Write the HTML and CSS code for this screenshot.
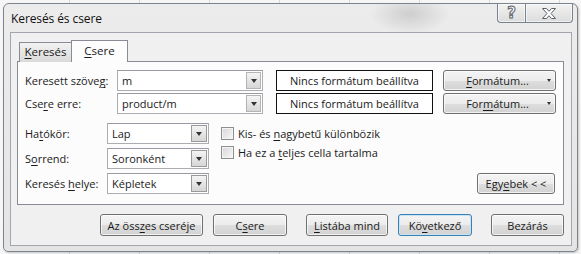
FILE: index.html
```html
<!DOCTYPE html>
<html lang="hu">
<head>
    <meta charset="UTF-8">
    <title>Keresés és csere</title>
    <link rel="stylesheet" href="styles.css">
</head>
<body>
    <div class="window">
        <div class="titlebar">
            <span class="title">Keresés és csere</span>
            <div class="caption-buttons">
                <span class="cap-btn help">?</span>
                <span class="cap-btn close">
                    <svg width="16" height="13" viewBox="0 0 16 13">
                        <path d="M1.5 1.5 H5.5 L8 4.3 L10.5 1.5 H14.5 L10 6.5 L14.5 11.5 H10.5 L8 8.7 L5.5 11.5 H1.5 L6 6.5 Z" fill="#fff" stroke="#5b6168" stroke-width="1" stroke-linejoin="round"/>
                    </svg>
                </span>
            </div>
        </div>
        <div class="client">
            <div class="tabs">
                <span class="tab"><u>K</u>eresés</span>
                <span class="tab active"><u>C</u>sere</span>
            </div>
            <div class="panel">
                <div class="find-row">
                    <label class="label-wide">Keresett szöve<u>g</u>:</label>
                    <div class="combo wide"><span class="value">m</span><span class="drop"></span></div>
                    <div class="format-box">Nincs formátum beállítva</div>
                    <button class="btn format"><span class="caption"><u>F</u>ormátum...</span><span class="arrow"></span></button>
                </div>
                <div class="find-row">
                    <label class="label-wide">Cse<u>r</u>e erre:</label>
                    <div class="combo wide"><span class="value">product/m</span><span class="drop"></span></div>
                    <div class="format-box">Nincs formátum beállítva</div>
                    <button class="btn format"><span class="caption">For<u>m</u>átum...</span><span class="arrow"></span></button>
                </div>

                <div class="options">
                    <div class="selects">
                        <div class="select-row">
                            <label class="label">Ha<u>t</u>ókör:</label>
                            <div class="combo narrow"><span class="value">Lap</span><span class="drop big"></span></div>
                        </div>
                        <div class="select-row">
                            <label class="label">S<u>o</u>rrend:</label>
                            <div class="combo narrow"><span class="value">Soronként</span><span class="drop big"></span></div>
                        </div>
                        <div class="select-row">
                            <label class="label">Keresés <u>h</u>elye:</label>
                            <div class="combo narrow"><span class="value">Képletek</span><span class="drop big"></span></div>
                        </div>
                    </div>
                    <div class="checks">
                        <label class="check"><span class="box"></span><span>Kis- és <u>n</u>agybetű különbözik</span></label>
                        <label class="check"><span class="box"></span><span>Ha ez a <u>t</u>eljes cella tartalma</span></label>
                    </div>
                    <button class="btn more">Egy<u>e</u>bek &lt; &lt;</button>
                </div>
            </div>
            <div class="actions">
                <button class="btn replace-all">Az öss<u>z</u>es cseréje</button>
                <button class="btn replace">C<u>s</u>ere</button>
                <button class="btn list-all"><u>L</u>istába mind</button>
                <button class="btn next default">Kö<u>v</u>etkező</button>
                <button class="btn close-btn">Bezárás</button>
            </div>
        </div>
    </div>
</body>
</html>
```

FILE: styles.css
```css
* {
    box-sizing: border-box;
}
body {
    margin: 0;
    width: 581px;
    height: 254px;
    overflow: hidden;
    font-family: 'Open Sans', 'Noto Sans', sans-serif;
    font-size: 11px;
    color: #1a1a1a;
    background-color: #f6f6f6;
    background-image: repeating-linear-gradient(to right, transparent 0, transparent 69px, #d9d9d9 69px, #d9d9d9 70px);
    padding: 3px 0 0 3px;
}
u {
    text-decoration: underline;
    text-underline-offset: 2px;
}
.window {
    width: 575px;
    height: 249px;
    border: 1px solid #7d848c;
    border-radius: 6px 6px 5px 5px;
    background: linear-gradient(to bottom, #ececec, #e4e4e4);
    padding: 0 5px 5px 6px;
    display: flex;
    flex-direction: column;
    box-shadow: 1px 1px 2px rgba(0, 0, 0, 0.2);
}
.titlebar {
    height: 28px;
    display: flex;
    justify-content: space-between;
    align-items: flex-start;
    margin-right: -1px;
    background: radial-gradient(ellipse 40px 20px at 400px 10px, rgba(170, 170, 170, 0.45), transparent);
}
.title {
    font-size: 12px;
    color: #111;
    padding: 6px 0 0 1px;
    letter-spacing: -0.1px;
}
.caption-buttons {
    display: flex;
}
.cap-btn {
    height: 19px;
    border: 1px solid #7a828b;
    border-top: none;
    background: linear-gradient(to bottom, #f2f2f2, #dcdcdc);
    display: flex;
    align-items: center;
    justify-content: center;
    box-shadow: inset 0 0 0 1px rgba(255, 255, 255, 0.6);
}
.help {
    width: 28px;
    border-radius: 0 0 0 4px;
    border-right: none;
    font-size: 15px;
    font-weight: bold;
    color: #fff;
    -webkit-text-stroke: 1px #5b6168;
    font-family: 'DejaVu Sans', sans-serif;
}
.close {
    width: 48px;
    border-radius: 0 0 4px 0;
}
.client {
    flex: 1;
    border: 1px solid #a3a7ad;
    background: #f0f0f0;
    padding: 7px 7px 9px 6px;
    display: flex;
    flex-direction: column;
}
.tabs {
    display: flex;
    align-items: flex-end;
    padding-left: 2px;
    height: 22px;
    margin-bottom: -1px;
    position: relative;
    z-index: 1;
}
.tab {
    height: 20px;
    width: 53px;
    border: 1px solid #898c95;
    border-bottom: none;
    background: linear-gradient(to bottom, #f2f2f2, #dadada);
    text-align: center;
    line-height: 18px;
    font-size: 11.5px;
}
.tab.active {
    height: 22px;
    width: 57px;
    margin-left: -1px;
    background: #fdfdfd;
    line-height: 20px;
}
.panel {
    height: 144px;
    border: 1px solid #898c95;
    background: #fcfcfc;
    padding: 8px 7px 0 7px;
}
.find-row {
    display: flex;
    align-items: center;
    height: 21px;
    margin-bottom: 2px;
}
.label-wide {
    width: 92px;
}
.label {
    width: 82px;
}
.combo {
    height: 21px;
    border: 1px solid #abadb3;
    border-top-color: #9a9ca3;
    background: #fff;
    display: flex;
    align-items: center;
    justify-content: space-between;
    padding: 1px;
}
.combo .value {
    padding-left: 3px;
}
.combo.wide {
    width: 146px;
}
.combo.narrow {
    width: 102px;
}
.drop {
    width: 15px;
    height: 17px;
    border: 1px solid #b4b4b4;
    background: linear-gradient(to bottom, #f4f4f4, #d6d6d6);
    display: flex;
    align-items: center;
    justify-content: center;
}
.drop::after {
    content: '';
    border-left: 3.5px solid transparent;
    border-right: 3.5px solid transparent;
    border-top: 4px solid #333;
    margin-top: 1px;
}
.drop.big {
    width: 16px;
    border-color: #9a9a9a;
}
.format-box {
    width: 157px;
    height: 21px;
    margin-left: 13px;
    border: 1px solid #111;
    background: #fff;
    text-align: center;
    line-height: 19px;
}
.btn {
    font-family: inherit;
    font-size: 11px;
    color: #1a1a1a;
    height: 22px;
    padding: 0;
    border: 1px solid #707070;
    border-radius: 3px;
    background: linear-gradient(to bottom, #f4f4f4 0%, #ececec 50%, #dedede 50%, #d2d2d2 100%);
    box-shadow: inset 0 0 0 1px rgba(255, 255, 255, 0.7);
}
.btn.format {
    width: 113px;
    height: 21px;
    margin-left: 10px;
    display: flex;
    align-items: center;
    position: relative;
}
.btn.format .caption {
    flex: 1;
    text-align: center;
    padding-left: 4px;
}
.btn.format .arrow {
    border-left: 2.5px solid transparent;
    border-right: 2.5px solid transparent;
    border-top: 3px solid #333;
    margin-right: 4px;
}
.options {
    display: flex;
    align-items: flex-end;
    margin-top: 9px;
}
.selects {
    display: flex;
    flex-direction: column;
    gap: 4px;
}
.select-row {
    display: flex;
    align-items: center;
}
.checks {
    align-self: flex-start;
    margin-left: 12px;
    padding-top: 4px;
    display: flex;
    flex-direction: column;
    gap: 6px;
    flex: 1;
}
.check {
    display: flex;
    align-items: center;
    height: 13px;
}
.box {
    width: 13px;
    height: 13px;
    border: 1px solid #8f8f8f;
    background: linear-gradient(135deg, #d6d6d6, #f8f8f8);
    box-shadow: inset 0 0 0 1px #f4f4f4;
    margin-right: 4px;
}
.btn.more {
    width: 78px;
    height: 21px;
    margin-right: 1px;
}
.actions {
    display: flex;
    justify-content: flex-end;
    margin-top: 9px;
}
.replace-all {
    width: 103px;
}
.replace {
    width: 74px;
    margin-left: 10px;
}
.list-all {
    width: 82px;
    margin-left: 19px;
}
.next {
    width: 74px;
    margin-left: 10px;
}
.btn.default {
    border-color: #3c7fb1;
    box-shadow: inset 0 0 0 1px #c6e6f8;
}
.close-btn {
    width: 73px;
    margin-left: 19px;
}
```
